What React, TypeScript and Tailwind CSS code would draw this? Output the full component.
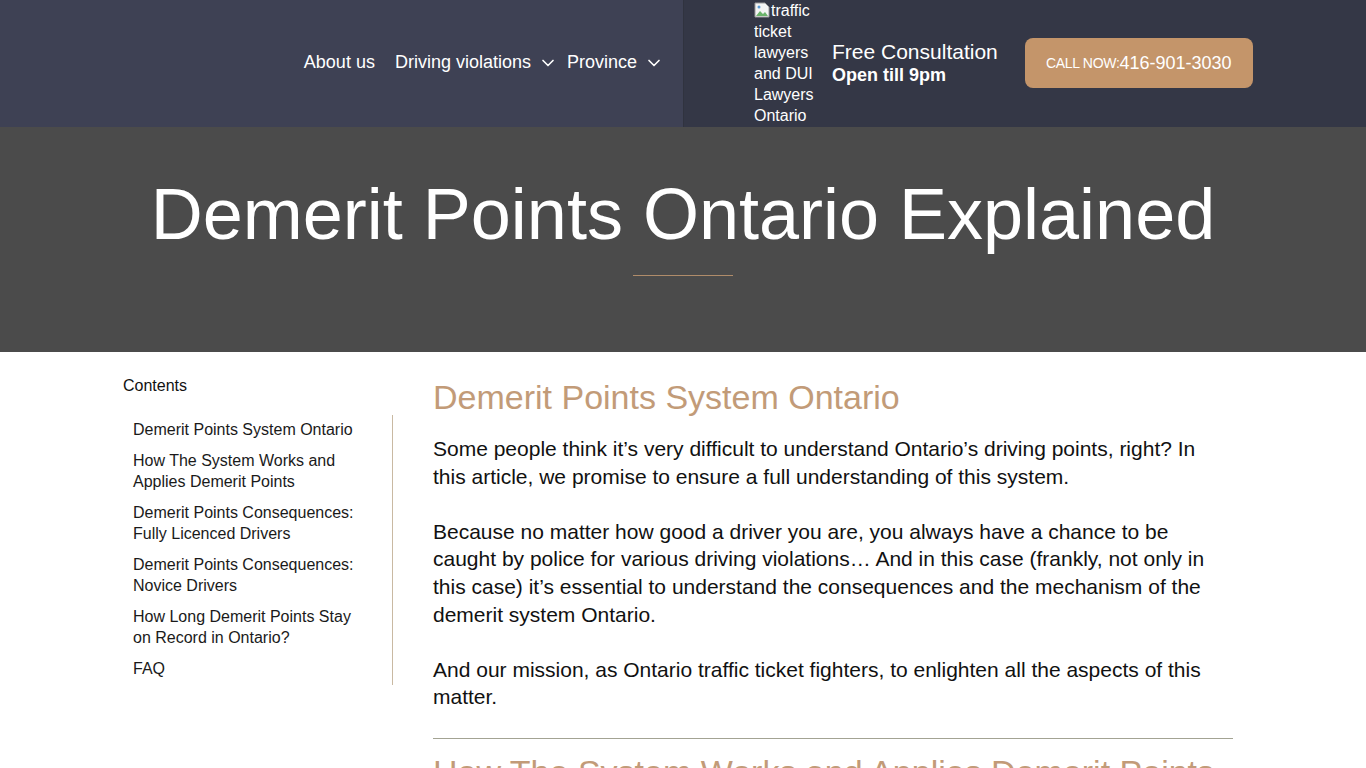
import { ChevronDown } from "lucide-react";

const toc = [
  "Demerit Points System Ontario",
  "How The System Works and Applies Demerit Points",
  "Demerit Points Consequences: Fully Licenced Drivers",
  "Demerit Points Consequences: Novice Drivers",
  "How Long Demerit Points Stay on Record in Ontario?",
  "FAQ",
];

function BrokenImage() {
  return (
    <span className="inline-block w-[16px] h-[16px] align-[-2px] mr-[1px]">
      <svg viewBox="0 0 16 16" width="16" height="16">
        <path d="M1 1h10l4 4v10H1z" fill="#f4f4f4" stroke="#9a9a9a" />
        <path d="M2 14l4-5 3 3 2-2 3 4z" fill="#6bb36b" />
        <circle cx="5" cy="5" r="1.5" fill="#5b9bd5" />
      </svg>
    </span>
  );
}

export default function App() {
  return (
    <div className="w-full min-h-screen bg-white font-['Liberation_Sans',Arial,sans-serif]">
      {/* Header */}
      <header className="flex h-[127px] text-white">
        <nav className="w-[683px] bg-[#3e4154] flex items-center justify-end pr-[19px] gap-x-[20px] text-[18px] pb-[2px]">
          <a className="cursor-pointer">About us</a>
          <a className="flex items-center gap-x-[7px]">
            Driving violations
            <ChevronDown size={20} strokeWidth={2} />
          </a>
          <a className="flex items-center gap-x-[7px] -ml-[11px]">
            Province
            <ChevronDown size={20} strokeWidth={2} />
          </a>
        </nav>
        <div className="flex-1 bg-[#343746] border-l border-[#30333f] flex items-start pl-[70px]">
          <div className="w-[62px] h-[127px] overflow-hidden text-[16px] leading-[21px] text-white">
            <BrokenImage />traffic ticket lawyers and DUI Lawyers Ontario
          </div>
          <div className="ml-[16px] mt-[40px] flex flex-col">
            <span className="text-[21px] leading-[24px]">Free Consultation</span>
            <span className="text-[18px] leading-[22px] font-bold">Open till 9pm</span>
          </div>
          <button className="ml-[27px] mt-[38px] w-[228px] h-[50px] rounded-[8px] bg-[#c4956a] flex items-center justify-center text-white">
            <span className="text-[14px] tracking-[-0.3px]">CALL NOW:</span>
            <span className="text-[18px]">416-901-3030</span>
          </button>
        </div>
      </header>

      {/* Hero */}
      <section className="h-[225px] bg-[#4b4b4b] flex flex-col items-center pt-[46px]">
        <h1 className="text-[72px] leading-[82px] text-white">Demerit Points Ontario Explained</h1>
        <span className="mt-[20px] w-[100px] h-[1px] bg-[#b08c6a]" />
      </section>

      {/* Content */}
      <section className="flex pl-[123px] pt-[25px] gap-x-[40px]">
        <aside className="w-[270px] shrink-0">
          <h3 className="text-[16px] leading-[18px] text-[#111]">Contents</h3>
          <ul className="mt-[20px] border-r border-[#c9b9a2] pl-[10px] pr-[20px] pt-[4px] pb-[6px] flex flex-col gap-y-[10px] text-[16px] leading-[21px] text-[#1a1a1a]">
            {toc.map((t) => (
              <li key={t}>{t}</li>
            ))}
          </ul>
        </aside>

        <main className="w-[800px] text-[#111]">
          <h2 className="text-[34px] leading-[40px] text-[#c29b78]">Demerit Points System Ontario</h2>
          <div className="mt-[18px] flex flex-col gap-y-[27.6px] text-[21px] leading-[27.6px]">
            <p>
              Some people think it’s very difficult to understand Ontario’s driving points, right? In this article, we
              promise to ensure a full understanding of this system.
            </p>
            <p>
              Because no matter how good a driver you are, you always have a chance to be caught by police for various
              driving violations… And in this case (frankly, not only in this case) it’s essential to understand the
              consequences and the mechanism of the demerit system Ontario.
            </p>
            <p>
              And our mission, as Ontario traffic ticket fighters, to enlighten all the aspects of this matter.
            </p>
          </div>
          <hr className="mt-[27px] border-0 h-[1px] bg-[#a3a393]" />
          <h2 className="mt-[13px] text-[34px] leading-[40px] text-[#c29b78]">
            How The System Works and Applies Demerit Points
          </h2>
        </main>
      </section>
    </div>
  );
}
